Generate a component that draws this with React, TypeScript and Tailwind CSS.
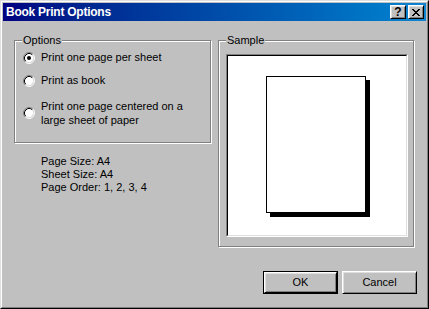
import React from "react";

function Radio({ checked }: { checked?: boolean }) {
  return (
    <svg width="12" height="12" viewBox="0 0 12 12" className="shrink-0">
      <circle cx="6" cy="6" r="4.5" fill="#ffffff" />
      <path d="M2.11 9.89 A5.5 5.5 0 0 1 9.89 2.11" stroke="#808080" strokeWidth="1" fill="none" />
      <path d="M9.89 2.11 A5.5 5.5 0 0 1 2.11 9.89" stroke="#ffffff" strokeWidth="1" fill="none" />
      <path d="M2.82 9.18 A4.5 4.5 0 0 1 9.18 2.82" stroke="#000000" strokeWidth="1" fill="none" />
      <path d="M9.18 2.82 A4.5 4.5 0 0 1 2.82 9.18" stroke="#dfdfdf" strokeWidth="1" fill="none" />
      {checked && <circle cx="6" cy="6" r="2" fill="#000000" />}
    </svg>
  );
}

function TitleButton({ children }: { children: React.ReactNode }) {
  return (
    <div className="w-[16px] h-[14px] bg-[#c0c0c0] border border-t-white border-l-white border-b-black border-r-black shadow-[inset_1px_1px_0_#dfdfdf,inset_-1px_-1px_0_#808080] flex items-center justify-center">
      {children}
    </div>
  );
}

function Btn({ label, def }: { label: string; def?: boolean }) {
  const inner = (
    <div
      className={
        "flex items-center justify-center bg-[#c0c0c0] border border-t-white border-l-white border-b-black border-r-black shadow-[inset_1px_1px_0_#dfdfdf,inset_-1px_-1px_0_#808080] " +
        (def ? "w-[73px] h-[21px]" : "w-[75px] h-[23px]")
      }
    >
      {label}
    </div>
  );
  if (def) {
    return <div className="border border-black w-[75px] h-[23px]">{inner}</div>;
  }
  return inner;
}

export default function App() {
  const font = { fontFamily: '"Liberation Sans", Arial, sans-serif' };
  return (
    <div
      className="w-[429px] h-[309px] bg-[#c0c0c0] border border-t-[#dfdfdf] border-l-[#dfdfdf] border-b-black border-r-black text-black text-[11px] leading-[13px]"
      style={font}
    >
      <div className="w-full h-full border border-t-white border-l-white border-b-[#808080] border-r-[#808080] p-[1px] flex flex-col">
        {/* Title bar */}
        <div className="h-[18px] bg-gradient-to-r from-[#000080] to-[#1084d0] flex items-center pl-[3px] pr-[2px]">
          <span className="text-white font-bold text-[12px] leading-[18px] tracking-[-0.25px] flex-1">Book Print Options</span>
          <div className="flex items-center">
            <TitleButton>
              <span className="font-bold text-[12px] leading-[12px] text-black">?</span>
            </TitleButton>
            <div className="w-[2px]" />
            <TitleButton>
              <svg width="8" height="7" viewBox="0 0 8 7" shapeRendering="crispEdges">
                <path d="M0 0h2v1h-2zM6 0h2v1h-2zM1 1h2v1h-2zM5 1h2v1h-2zM2 2h4v1h-4zM3 3h2v1h-2zM2 4h4v1h-4zM1 5h2v1h-2zM5 5h2v1h-2zM0 6h2v1h-2zM6 6h2v1h-2z" fill="#000" />
              </svg>
            </TitleButton>
          </div>
        </div>

        {/* Body */}
        <div className="flex-1 flex flex-col pl-[11px] pt-[19px]">
          <div className="flex gap-[6px]">
            {/* Left column */}
            <div className="w-[198px] flex flex-col">
              <div className="relative w-[197px] h-[103px] border border-[#808080] shadow-[inset_1px_1px_0_#ffffff,1px_1px_0_#ffffff]">
                <span className="absolute -top-[7px] left-[7px] bg-[#c0c0c0] px-[1px]">Options</span>
                <div className="flex flex-col pl-[8px] pt-[10px]">
                  <div className="flex items-center gap-[6px] h-[13px]">
                    <Radio checked />
                    <span>Print one page per sheet</span>
                  </div>
                  <div className="flex items-center gap-[6px] h-[13px] mt-[10px]">
                    <Radio />
                    <span>Print as book</span>
                  </div>
                  <div className="flex items-center gap-[6px] mt-[12px]">
                    <Radio />
                    <span className="leading-[14px]">
                      Print one page centered on a<br />large sheet of paper
                    </span>
                  </div>
                </div>
              </div>
              <div className="flex flex-col pl-[27px] pt-[12px]">
                <span>Page Size: A4</span>
                <span>Sheet Size: A4</span>
                <span>Page Order: 1, 2, 3, 4</span>
              </div>
            </div>

            {/* Right column */}
            <div className="relative w-[196px] h-[207px] border border-[#808080] shadow-[inset_1px_1px_0_#ffffff,1px_1px_0_#ffffff] pl-[7px] pt-[13px]">
              <span className="absolute -top-[7px] left-[7px] bg-[#c0c0c0] px-[1px]">Sample</span>
              <div className="w-[182px] h-[183px] border border-t-[#808080] border-l-[#808080] border-b-white border-r-white">
                <div className="w-full h-full bg-white border border-t-black border-l-black border-b-[#dfdfdf] border-r-[#dfdfdf] flex items-center justify-center">
                  <div className="w-[100px] h-[137px] bg-white border border-black shadow-[4px_4px_0_#000] -translate-x-[1px] -translate-y-[1px]" />
                </div>
              </div>
            </div>
          </div>

          {/* Buttons */}
          <div className="flex justify-end gap-[4px] pr-[9px] mt-[24px]">
            <Btn label="OK" def />
            <Btn label="Cancel" />
          </div>
        </div>
      </div>
    </div>
  );
}
